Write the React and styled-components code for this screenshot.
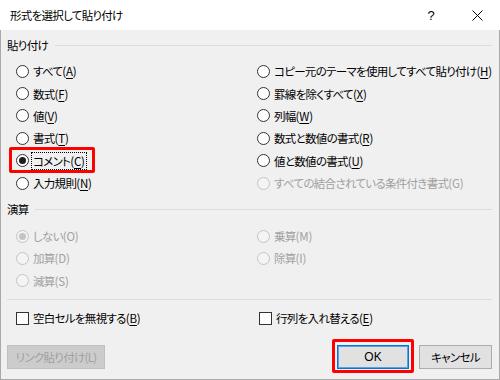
import React from "react";
import styled, { createGlobalStyle, css } from "styled-components";

const GlobalStyle = createGlobalStyle`
  html, body {
    margin: 0;
    padding: 0;
    background: #ffffff;
  }
  body {
    font-family: "Noto Sans CJK JP", "Liberation Sans", sans-serif;
    font-size: 11.5px;
    letter-spacing: -0.7px;
    color: #000;
    font-feature-settings: "palt";
  }
`;

const Window = styled.div`
  width: 500px;
  height: 380px;
  box-sizing: border-box;
  display: flex;
  flex-direction: column;
  overflow: hidden;
`;

const TitleBar = styled.div`
  height: 30px;
  flex: none;
  display: flex;
  align-items: center;
  background: #ffffff;
  padding-left: 10px;
`;

const TitleText = styled.div`
  flex: 1;
  line-height: 16px;
`;

const CaptionButton = styled.div`
  width: 46px;
  height: 30px;
  display: flex;
  align-items: center;
  justify-content: center;
  font-family: "Liberation Sans", sans-serif;
  font-size: 13px;
  letter-spacing: 0;
`;

const Body = styled.div`
  flex: 1;
  background: #f0f0f0;
  border: 1px solid #a9a9a9;
  border-top: none;
  padding: 0 7px 0 6px;
  display: flex;
  flex-direction: column;
`;

const GroupHeader = styled.div`
  display: flex;
  align-items: center;
  height: 18px;
  margin-top: ${(p) => p.$top}px;
  gap: ${(p) => p.$gap}px;
  line-height: 18px;

  &::after {
    content: "";
    flex: 1;
    height: 1px;
    background: #dcdcdc;
  }
`;

const OptionGrid = styled.div`
  display: grid;
  grid-template-columns: ${(p) => p.$col}px 1fr;
  grid-auto-rows: ${(p) => p.$row}px;
  padding-left: 9px;
  margin-top: ${(p) => p.$top}px;
`;

const Option = styled.div`
  position: relative;
  display: flex;
  align-items: center;
  gap: 3px;
  white-space: nowrap;
  color: ${(p) => (p.$disabled ? "#a0a0a0" : "#000")};
`;

const RadioCircle = styled.span`
  width: 13px;
  height: 13px;
  box-sizing: border-box;
  border-radius: 50%;
  flex: none;
  display: flex;
  align-items: center;
  justify-content: center;
  border: 1px solid ${(p) => (p.$disabled ? "#c4c4c4" : "#333333")};
  background: ${(p) => (p.$disabled ? "#f4f4f4" : "#ffffff")};

  ${(p) =>
    p.$checked &&
    css`
      &::after {
        content: "";
        width: 7px;
        height: 7px;
        border-radius: 50%;
        background: ${p.$disabled ? "#c4c4c4" : "#1e1e1e"};
      }
    `}
`;

const CheckBox = styled.span`
  width: 13px;
  height: 13px;
  box-sizing: border-box;
  flex: none;
  border: 1px solid #333333;
  background: #ffffff;
`;

const Label = styled.span`
  line-height: 16px;
  padding: 0 1px;
  ${(p) =>
    p.$focused &&
    css`
      outline: 1px dotted #000;
      outline-offset: 0;
    `}
`;

// the "(X)" access-key part keeps normal spacing
const Mnemonic = styled.span`
  letter-spacing: -0.2px;
`;

const Key = styled.span`
  text-decoration: ${(p) => (p.$disabled ? "none" : "underline")};
  text-underline-offset: 2px;
`;

const Highlight = styled.span`
  position: absolute;
  left: ${(p) => p.$l}px;
  top: ${(p) => p.$t}px;
  width: ${(p) => p.$w}px;
  height: ${(p) => p.$h}px;
  box-sizing: border-box;
  border: 3px solid #ff0000;
  border-radius: 2px;
  pointer-events: none;
`;

const Divider = styled.div`
  height: 1px;
  background: #dcdcdc;
  margin-top: 7px;
`;

const ButtonRow = styled.div`
  display: flex;
  justify-content: space-between;
  margin-top: 16px;
`;

const ButtonGroup = styled.div`
  display: flex;
  gap: 10px;
`;

const Button = styled.div`
  position: relative;
  width: ${(p) => p.$w}px;
  height: 24px;
  box-sizing: border-box;
  display: flex;
  align-items: center;
  justify-content: center;
  background: ${(p) => (p.$disabled ? "#cccccc" : "#e1e1e1")};
  border: 1px solid
    ${(p) => (p.$disabled ? "#bfbfbf" : p.$default ? "#0078d7" : "#adadad")};
  color: ${(p) => (p.$disabled ? "#a0a0a0" : "#000")};
  font-family: ${(p) =>
    p.$latin
      ? `"Liberation Sans", sans-serif`
      : `"Noto Sans CJK JP", "Liberation Sans", sans-serif`};
  font-size: ${(p) => (p.$latin ? 12 : 11.5)}px;
  letter-spacing: ${(p) => (p.$latin ? 0 : -0.7)}px;
  ${(p) =>
    p.$default &&
    css`
      box-shadow: inset 0 0 0 1px #5aa2e0;
    `}
`;

function Choice({ kind = "radio", label, k, checked, disabled, focused, children }) {
  return (
    <Option $disabled={disabled}>
      {kind === "radio" ? (
        <RadioCircle $checked={checked} $disabled={disabled} />
      ) : (
        <CheckBox />
      )}
      <Label $focused={focused}>
        {label}
        <Mnemonic>
          (<Key $disabled={disabled}>{k}</Key>)
        </Mnemonic>
      </Label>
      {children}
    </Option>
  );
}

const pasteOptions = [
  { label: "すべて", k: "A" },
  { label: "コピー元のテーマを使用してすべて貼り付け", k: "H" },
  { label: "数式", k: "F" },
  { label: "罫線を除くすべて", k: "X" },
  { label: "値", k: "V" },
  { label: "列幅", k: "W" },
  { label: "書式", k: "T" },
  { label: "数式と数値の書式", k: "R" },
  { label: "コメント", k: "C", checked: true, focused: true, marked: true },
  { label: "値と数値の書式", k: "U" },
  { label: "入力規則", k: "N" },
  { label: "すべての結合されている条件付き書式", k: "G", disabled: true },
];

const opOptions = [
  { label: "しない", k: "O", checked: true },
  { label: "乗算", k: "M" },
  { label: "加算", k: "D" },
  { label: "除算", k: "I" },
  { label: "減算", k: "S" },
];

export default function App() {
  return (
    <>
      <GlobalStyle />
      <Window>
        <TitleBar>
          <TitleText>形式を選択して貼り付け</TitleText>
          <CaptionButton>?</CaptionButton>
          <CaptionButton>
            <svg width="11" height="11" viewBox="0 0 11 11">
              <path d="M0.5 0.5 L10.5 10.5 M10.5 0.5 L0.5 10.5" stroke="#000" strokeWidth="1" />
            </svg>
          </CaptionButton>
        </TitleBar>
        <Body>
          <GroupHeader $top={6} $gap={7}>貼り付け</GroupHeader>
          <OptionGrid $col={241} $row={22.4} $top={6}>
            {pasteOptions.map((o) => (
              <Choice key={o.k} {...o}>
                {o.marked && <Highlight $l={-7} $t={-3} $w={86} $h={26} />}
              </Choice>
            ))}
          </OptionGrid>
          <GroupHeader $top={6} $gap={6}>演算</GroupHeader>
          <OptionGrid $col={241} $row={22.4} $top={6.5}>
            {opOptions.map((o) => (
              <Choice key={o.k} {...o} disabled />
            ))}
          </OptionGrid>
          <Divider />
          <OptionGrid $col={243} $row={22} $top={7}>
            <Choice kind="check" label="空白セルを無視する" k="B" />
            <Choice kind="check" label="行列を入れ替える" k="E" />
          </OptionGrid>
          <ButtonRow>
            <Button $w={98} $disabled>
              リンク貼り付け(L)
            </Button>
            <ButtonGroup>
              <Button $w={72} $default $latin>
                OK
                <Highlight $l={-6} $t={-7} $w={82} $h={34} />
              </Button>
              <Button $w={73}>キャンセル</Button>
            </ButtonGroup>
          </ButtonRow>
        </Body>
      </Window>
    </>
  );
}
